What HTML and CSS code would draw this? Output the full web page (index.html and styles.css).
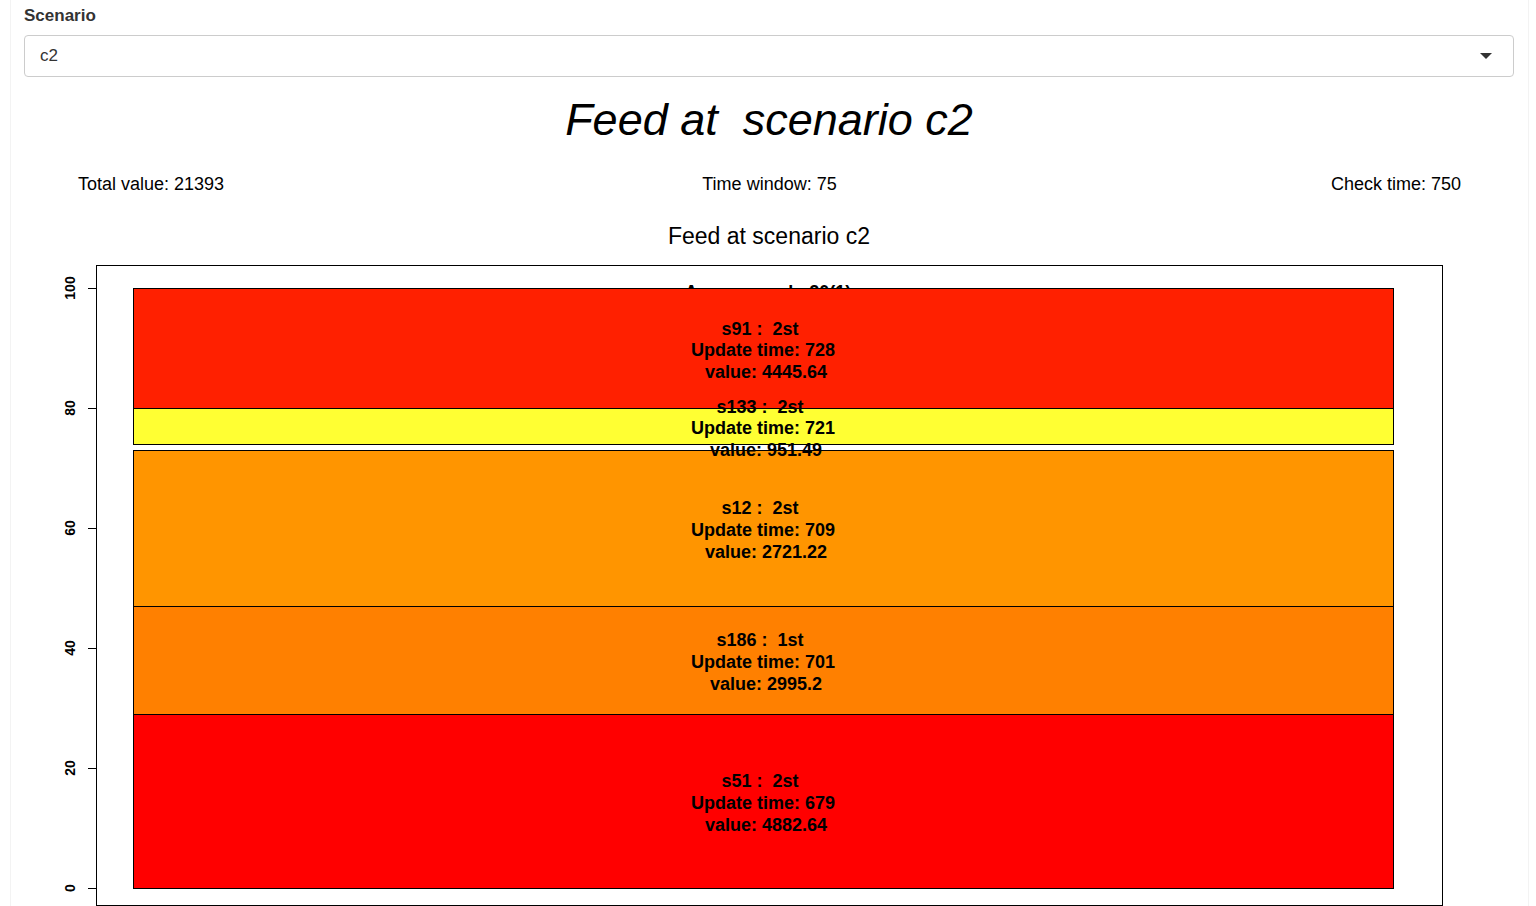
FILE: index.html
```html
<!DOCTYPE html>
<html>
<head>
<meta charset="utf-8">
<link rel="stylesheet" href="styles.css">
</head>
<body>
<div class="page">
  <label class="field-label">Scenario</label>
  <div class="select">
    <span class="select-value">c2</span>
    <span class="caret"></span>
  </div>
  <h1 class="title">Feed at&nbsp; scenario c2</h1>
  <div class="stats">
    <div class="stat stat-left">Total value: 21393</div>
    <div class="stat stat-center">Time window: 75</div>
    <div class="stat stat-right">Check time: 750</div>
  </div>
  <svg class="chart" width="1490" height="696" viewBox="0 0 1490 696" xmlns="http://www.w3.org/2000/svg">
    <text class="chart-title" x="745" y="34" text-anchor="middle">Feed at scenario c2</text>
    <rect x="72.5" y="55.5" width="1346" height="640" fill="none" stroke="#000" stroke-width="1"/>
    <g stroke="#000" stroke-width="1">
      <line x1="64" x2="72" y1="78.5" y2="78.5"/>
      <line x1="64" x2="72" y1="198.5" y2="198.5"/>
      <line x1="64" x2="72" y1="318.5" y2="318.5"/>
      <line x1="64" x2="72" y1="438.5" y2="438.5"/>
      <line x1="64" x2="72" y1="558.5" y2="558.5"/>
      <line x1="64" x2="72" y1="678.5" y2="678.5"/>
    </g>
    <g class="axis-label" text-anchor="middle">
      <text transform="translate(51,78) rotate(-90)">100</text>
      <text transform="translate(51,198) rotate(-90)">80</text>
      <text transform="translate(51,318) rotate(-90)">60</text>
      <text transform="translate(51,438) rotate(-90)">40</text>
      <text transform="translate(51,558) rotate(-90)">20</text>
      <text transform="translate(51,678) rotate(-90)">0</text>
    </g>
    <text class="bar-label" x="744" y="88" text-anchor="middle">Average rank: 20(1)</text>
    <g stroke="#000" stroke-width="1">
      <rect x="109.5" y="78.5" width="1260" height="120" fill="#ff2000"/>
      <rect x="109.5" y="198.5" width="1260" height="36" fill="#ffff33"/>
      <rect x="109.5" y="240.5" width="1260" height="156" fill="#ff9500"/>
      <rect x="109.5" y="396.5" width="1260" height="108" fill="#ff8000"/>
      <rect x="109.5" y="504.5" width="1260" height="174" fill="#ff0000"/>
    </g>
    <g class="bar-label" text-anchor="middle">
      <text x="736" y="125">s91 :&#160; 2st</text>
      <text x="739" y="146">Update time: 728</text>
      <text x="742" y="168">value: 4445.64</text>

      <text x="736" y="203">s133 :&#160; 2st</text>
      <text x="739" y="224">Update time: 721</text>
      <text x="742" y="246">value: 951.49</text>

      <text x="736" y="304">s12 :&#160; 2st</text>
      <text x="739" y="326">Update time: 709</text>
      <text x="742" y="348">value: 2721.22</text>

      <text x="736" y="436">s186 :&#160; 1st</text>
      <text x="739" y="458">Update time: 701</text>
      <text x="742" y="480">value: 2995.2</text>

      <text x="736" y="577">s51 :&#160; 2st</text>
      <text x="739" y="599">Update time: 679</text>
      <text x="742" y="621">value: 4882.64</text>
    </g>
  </svg>
</div>
</body>
</html>
```

FILE: styles.css
```css
html, body {
  margin: 0;
  padding: 0;
  background: #fff;
  overflow: hidden;
}
body {
  font-family: "Liberation Sans", Arial, sans-serif;
  color: #000;
}
.page {
  box-sizing: border-box;
  margin-left: 10px;
  width: 1519px;
  height: 906px;
  border-left: 1px solid #f3f3f3;
  border-right: 1px solid #f3f3f3;
  padding: 4px 14px 0 13px;
}
.field-label {
  display: block;
  font-size: 17px;
  font-weight: bold;
  line-height: 24px;
  color: #333;
  margin-bottom: 7px;
}
.select {
  box-sizing: border-box;
  height: 42px;
  border: 1px solid #cccccc;
  border-radius: 4px;
  display: flex;
  align-items: center;
  justify-content: space-between;
  padding: 0 21px 0 15px;
}
.select-value {
  font-size: 17px;
  color: #333;
}
.caret {
  width: 0;
  height: 0;
  border-left: 6px solid transparent;
  border-right: 6px solid transparent;
  border-top: 6px solid #333;
}
.title {
  margin: 17px 0 0 0;
  font-size: 45px;
  font-style: italic;
  font-weight: normal;
  line-height: 52px;
  text-align: center;
}
.stats {
  margin-top: 27px;
  display: grid;
  grid-template-columns: 1fr auto 1fr;
  padding: 0 53px 0 54px;
  font-size: 18px;
  line-height: 22px;
}
.stat-left { justify-self: start; }
.stat-center { justify-self: center; }
.stat-right { justify-self: end; }
.chart {
  display: block;
  margin-top: 15px;
}
.chart-title {
  font-family: "Liberation Sans", Arial, sans-serif;
  font-size: 23px;
}
.axis-label {
  font-family: "Liberation Sans", Arial, sans-serif;
  font-size: 14px;
  font-weight: bold;
}
.bar-label {
  font-family: "Liberation Sans", Arial, sans-serif;
  font-size: 18px;
  font-weight: bold;
}
```
